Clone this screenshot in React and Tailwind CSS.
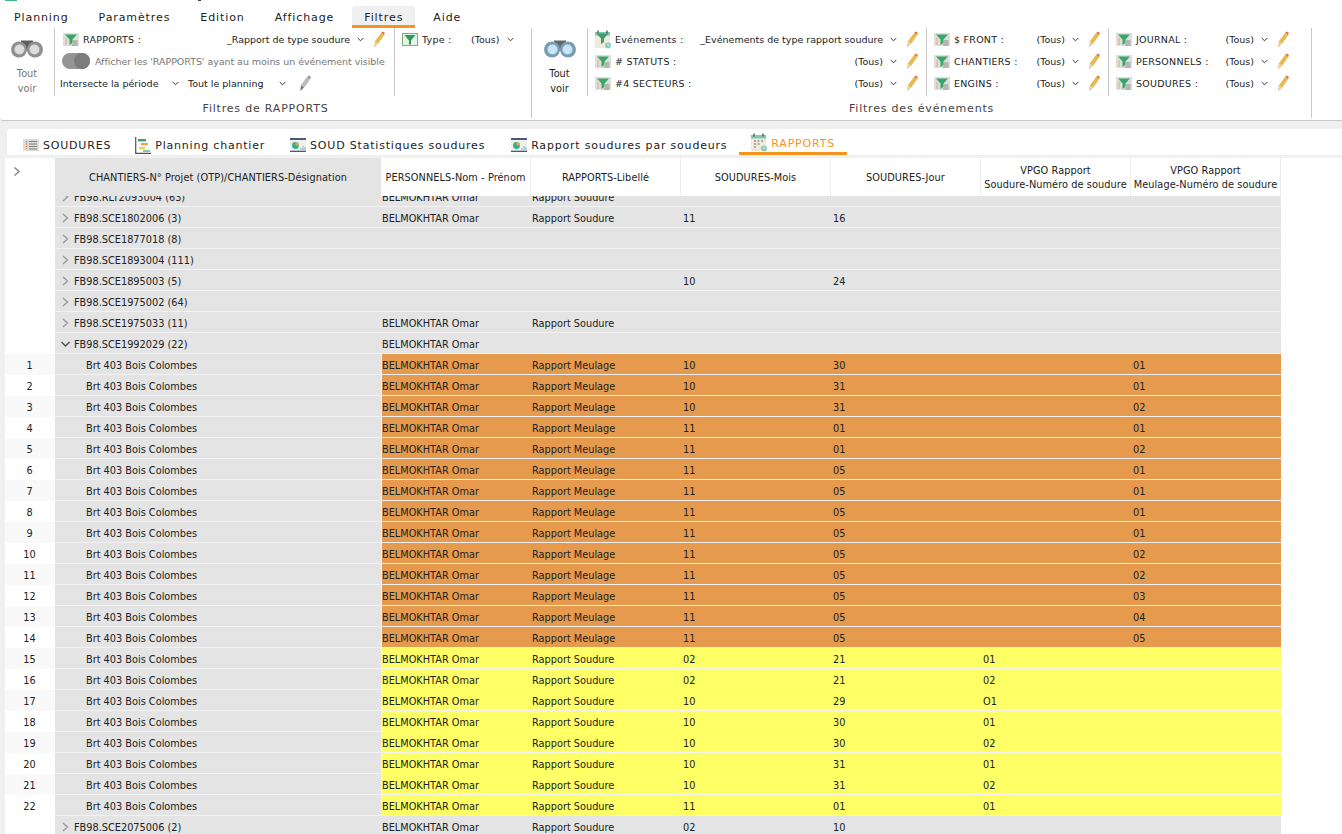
import React from 'react';

const FONT = "font-['DejaVu_Sans',Verdana,sans-serif]";

const Chevron = ({ className = 'ml-[7px]' }) => (
  <svg width="7" height="5" viewBox="0 0 7 5" className={`shrink-0 ${className}`}>
    <path d="M0.7 1 L3.5 3.8 L6.3 1" fill="none" stroke="#333" strokeWidth="1" />
  </svg>
);

const Pencil = ({ gray = false, className = 'ml-[10px]' }) => (
  <svg width="11" height="16" viewBox="0 0 11 16" className={`shrink-0 ${className}`}>
    <path d="M0.6 15.4 L1.2 10.6 L7.6 1.8 L10.2 3.6 L3.8 12.6 Z" fill={gray ? '#bdbdbd' : '#edbb4a'} stroke={gray ? '#9a9a9a' : '#c99a35'} strokeWidth="0.5" />
    <path d="M7.6 1.8 L8.7 0.4 L10.9 2 L10.2 3.6 Z" fill={gray ? '#8e8e8e' : '#e2683c'} />
    <path d="M0.6 15.4 L1.2 10.6 L3.8 12.6 Z" fill={gray ? '#777' : '#e9d6ae'} />
  </svg>
);

const Binoculars = ({ color = false }) => {
  const lens = color ? '#c8e4f5' : '#dcdcdc';
  const rim = color ? '#7c9cb3' : '#8f8f8f';
  return (
    <svg width="32" height="18" viewBox="0 0 32 18">
      <path d="M10 0.5 H22 V11 H10 Z" fill={color ? '#5a6872' : '#5c5c5c'} />
      <circle cx="8" cy="9.5" r="8" fill={rim} />
      <circle cx="24" cy="9.5" r="8" fill={rim} />
      <circle cx="8.5" cy="9.5" r="5" fill={lens} />
      <circle cx="23.5" cy="9.5" r="5" fill={lens} />
    </svg>
  );
};

const FunnelIcon = () => (
  <svg width="16" height="13" viewBox="0 0 16 13" className="shrink-0">
    <rect width="16" height="13" fill="#dededa" />
    <path d="M2 1.5 H14 L9.5 6.5 V10 L6.5 12 V6.5 Z" fill="#38a86a" />
    <path d="M10 8 H14.5 M10 10 H14.5 M9 12 H14.5" stroke="#777" strokeWidth="0.8" />
    <path d="M3 5.5 V12" stroke="#e0703c" strokeWidth="1" strokeDasharray="1 1" />
  </svg>
);

const CalendarIcon = ({ funnel = false }) => (
  <svg width="16" height="19" viewBox="0 0 16 19" className="shrink-0">
    <rect x="0" y="3" width="15" height="15" fill="#efeadb" />
    <rect x="0" y="2" width="15" height="3.5" fill="#7fc7b4" />
    <path d="M3 0.5 V3.5 M12 0.5 V3.5" stroke="#42645a" strokeWidth="1.4" />
    {funnel ? (
      <path d="M1.5 3.5 H13.5 L9 8.5 V12 L6 14 V8.5 Z" fill="#3f9e68" />
    ) : (
      <path d="M3 8 H5 M6.5 8 H8.5 M10 8 H12 M3 11 H5 M6.5 11 H8.5 M3 14 H5" stroke="#9a9686" strokeWidth="1.3" />
    )}
    <circle cx="13" cy="15.5" r="3" fill="#87cdbc" />
    <path d="M13 14 V15.5 H14.3" fill="none" stroke="#fff" strokeWidth="0.7" />
  </svg>
);

const TypeIcon = () => (
  <svg width="16" height="13" viewBox="0 0 16 13" className="shrink-0">
    <rect x="0.5" y="0.5" width="15" height="12" fill="#e6f3e0" stroke="#7fae7a" />
    <path d="M2.5 2 H13.5 L9 7.5 V11 L7 12 V7.5 Z" fill="#2f9a5e" />
  </svg>
);

const ListIcon = () => (
  <svg width="16" height="12" viewBox="0 0 16 12" className="shrink-0">
    <rect width="16" height="12" fill="#dedcd8" />
    <path d="M6 2.5 H14 M6 5 H14 M6 7.5 H14 M6 10 H14" stroke="#777" strokeWidth="0.9" />
    <path d="M3.5 2 V10" stroke="#e0703c" strokeWidth="1.4" strokeDasharray="1.2 1.2" />
  </svg>
);

const GanttIcon = () => (
  <svg width="16" height="17" viewBox="0 0 16 17" className="shrink-0">
    <path d="M0.7 0 V16.3 H16" fill="none" stroke="#44546a" strokeWidth="1.2" />
    <rect x="3" y="2" width="8" height="2.4" fill="#3f9e68" />
    <rect x="6" y="6" width="7" height="2.4" fill="#f2a640" />
    <rect x="4" y="10" width="6" height="2.4" fill="#e8d24a" />
    <rect x="8" y="13" width="7" height="2" fill="#7fc7b4" />
  </svg>
);

const StatsIcon = () => (
  <svg width="16" height="14" viewBox="0 0 16 14" className="shrink-0">
    <rect width="16" height="14" fill="#eef0ee" />
    <rect width="16" height="2" fill="#4a5a78" />
    <circle cx="5.5" cy="7.5" r="3.4" fill="#2fae8e" />
    <path d="M5.5 7.5 V4.1 A3.4 3.4 0 0 1 8.9 7.5 Z" fill="#f0a63c" />
    <path d="M11 12 V10 M13 12 V8 M15 12 V9" stroke="#9fb5c9" strokeWidth="1.2" />
    <rect y="12.7" width="16" height="1.3" fill="#4a5a78" />
  </svg>
);

const FilterRow = ({ icon = <FunnelIcon />, label, value = '(Tous)', chevron, pencil }) => (
  <div className="flex items-center h-[22px] text-[9.5px] text-[#222]">
    <span className="w-[16px] flex justify-center shrink-0">{icon}</span>
    <span className="ml-[4px] pt-[2px] whitespace-nowrap tracking-[0.25px]">{label}</span>
    <span className="ml-auto pt-[2px] whitespace-nowrap">{value}</span>
    <Chevron className={chevron || 'ml-[7px]'} />
    <Pencil className={pencil || 'ml-[10px]'} />
  </div>
);

const ToutVoir = ({ color }) => (
  <div className={`flex flex-col items-center w-full pt-[12px] text-[9.75px] leading-[15px] ${color ? 'text-[#222]' : 'text-[#777]'}`}>
    <Binoculars color={color} />
    <span className="mt-[8px]">Tout</span>
    <span>voir</span>
  </div>
);

const Divider = ({ tall }) => (
  <div className={`w-px shrink-0 bg-[#c8c8c8] ${tall ? 'h-[90px]' : 'h-[68px]'}`} />
);

const GroupLabel = ({ children }) => (
  <div className="text-center text-[11px] tracking-[0.8px] text-[#444] leading-[16px] mt-[5px]">{children}</div>
);

const Ribbon = () => (
  <div className="h-[93px] flex border-b border-[#c8c8c8] rounded-bl-[3px] bg-white">
    <div className="w-[532px] shrink-0 flex">
      <div className="w-[531px]">
        <div className="flex h-[68px]">
          <div className="w-[54px] shrink-0"><ToutVoir /></div>
          <Divider />
          <div className="w-[339px] shrink-0 pl-[8px] pr-[9px]">
            <FilterRow label="RAPPORTS :" value="_Rapport de type soudure" />
            <div className="flex items-center h-[22px] -ml-[1px] text-[9.5px] text-[#777] whitespace-nowrap">
              <div className="w-[28px] h-[16px] rounded-full bg-[#949494] flex justify-end shrink-0">
                <div className="w-[16px] h-[16px] rounded-full bg-[#7c7c7c]" />
              </div>
              <span className="ml-[5px] pt-[2px] tracking-[-0.05px]">Afficher les 'RAPPORTS' ayant au moins un événement visible</span>
            </div>
            <div className="flex items-center h-[22px] -ml-[3px] text-[9.5px] text-[#222] whitespace-nowrap">
              <span className="w-[100px] pt-[2px]">Intersecte la période</span>
              <Chevron className="ml-[12px]" />
              <span className="ml-[9px] w-[79px] pt-[2px]">Tout le planning</span>
              <Chevron className="ml-[12px]" />
              <Pencil gray className="ml-[14px]" />
            </div>
          </div>
          <Divider />
          <div className="flex-1 pl-[7px]">
            <div className="flex items-center h-[22px] text-[9.5px] text-[#222]">
              <TypeIcon />
              <span className="ml-[4px] pt-[2px] w-[30px] tracking-[0.25px] whitespace-nowrap">Type :</span>
              <span className="ml-[19px] pt-[2px]">(Tous)</span>
              <Chevron className="ml-[8px]" />
            </div>
          </div>
        </div>
        <GroupLabel>Filtres de RAPPORTS</GroupLabel>
      </div>
      <Divider tall />
    </div>
    <div className="w-[779px] shrink-0">
      <div className="flex h-[68px]">
        <div className="w-[55px] shrink-0"><ToutVoir color /></div>
        <Divider />
        <div className="w-[338px] shrink-0 pl-[7px] pr-[8px]">
          <FilterRow icon={<CalendarIcon funnel />} label="Evénements :" value="_Evénements de type rapport soudure" />
          <FilterRow label="# STATUTS :" />
          <FilterRow label="#4 SECTEURS :" />
        </div>
        <Divider />
        <div className="w-[181px] shrink-0 pl-[7px] pr-[8px]">
          <FilterRow label="$ FRONT :" />
          <FilterRow label="CHANTIERS :" />
          <FilterRow label="ENGINS :" />
        </div>
        <Divider />
        <div className="w-[202px] shrink-0 pl-[7px] pr-[22px]">
          <FilterRow label="JOURNAL :" />
          <FilterRow label="PERSONNELS :" />
          <FilterRow label="SOUDURES :" />
        </div>
      </div>
      <GroupLabel>Filtres des événements</GroupLabel>
    </div>
    <Divider tall />
  </div>
);

const menus = ['Planning', 'Paramètres', 'Edition', 'Affichage', 'Filtres', 'Aide'];

const Tab = ({ icon, label, className = '' }) => (
  <div className={`flex items-center gap-[4px] whitespace-nowrap ${className}`}>
    {icon}
    <span className="pt-[2px]">{label}</span>
  </div>
);

const Tabs = () => (
  <div className="mt-[8px] ml-[7px] h-[26px] bg-white rounded-l-[4px] flex items-center pl-[16px] pt-[6px] text-[11px] tracking-[0.8px] text-[#222]">
    <Tab icon={<ListIcon />} label="SOUDURES" />
    <Tab icon={<GanttIcon />} label="Planning chantier" className="ml-[24px]" />
    <Tab icon={<StatsIcon />} label="SOUD Statistiques soudures" className="ml-[25px]" />
    <Tab icon={<StatsIcon />} label="Rapport soudures par soudeurs" className="ml-[26px]" />
    <div className="ml-[12px] -mt-[6px] h-[26px] w-[108px] border-b-[3px] border-[#f7941d] flex items-center gap-[4px] pl-[12px] pt-[4px] text-[#f7941d] whitespace-nowrap">
      <CalendarIcon />
      <span className="pt-[4px]">RAPPORTS</span>
    </div>
  </div>
);

const COLS = 'grid grid-cols-[50px_326px_repeat(6,150px)]';

const headers = [
  ['PERSONNELS-Nom - Prénom'],
  ['RAPPORTS-Libellé'],
  ['SOUDURES-Mois'],
  ['SOUDURES-Jour'],
  ['VPGO Rapport', 'Soudure-Numéro de soudure'],
  ['VPGO Rapport', 'Meulage-Numéro de soudure'],
];

const TableHeader = () => (
  <div className={`${COLS} h-[38px] text-[9.75px] tracking-[0.08px] leading-[14px] text-[#222]`}>
    <div className="bg-white pl-[7px] pt-[8px]">
      <svg width="8" height="11" viewBox="0 0 8 11" className="ml-[1px]">
        <path d="M1.5 1.5 L6 5.5 L1.5 9.5" fill="none" stroke="#8c8c8c" strokeWidth="1.6" />
      </svg>
    </div>
    <div className="bg-[#e4e4e4] pt-[2px] flex items-center justify-center whitespace-nowrap">CHANTIERS-N° Projet (OTP)/CHANTIERS-Désignation</div>
    {headers.map((lines, i) => (
      <div key={i} className="bg-white pt-[2px] border-r border-[#eeeeee] flex flex-col items-center justify-center whitespace-nowrap">
        {lines.map((l) => <span key={l}>{l}</span>)}
      </div>
    ))}
  </div>
);

const B = 'BELMOKHTAR Omar';
const S = 'Rapport Soudure';
const M = 'Rapport Meulage';

const groups1 = [
  ['FB98.RLT2093004 (63)', B, S],
  ['FB98.SCE1802006 (3)', B, S, '11', '16'],
  ['FB98.SCE1877018 (8)'],
  ['FB98.SCE1893004 (111)'],
  ['FB98.SCE1895003 (5)', '', '', '10', '24'],
  ['FB98.SCE1975002 (64)'],
  ['FB98.SCE1975033 (11)', B, S],
];

const meulage = [
  ['10', '30', '01'], ['10', '31', '01'], ['10', '31', '02'], ['11', '01', '01'], ['11', '01', '02'],
  ['11', '05', '01'], ['11', '05', '01'], ['11', '05', '01'], ['11', '05', '01'], ['11', '05', '02'],
  ['11', '05', '02'], ['11', '05', '03'], ['11', '05', '04'], ['11', '05', '05'],
];

const soudure = [
  ['02', '21', '01'], ['02', '21', '02'], ['10', '29', 'O1'], ['10', '30', '01'],
  ['10', '30', '02'], ['10', '31', '01'], ['10', '31', '02'], ['11', '01', '01'],
];

const Cell = ({ children, className = 'pl-[1px]' }) => (
  <div className={`pt-[4px] flex items-center whitespace-nowrap overflow-hidden ${className}`}>{children}</div>
);

const GroupRow = ({ name, person, lib, mois, jour, open }) => (
  <div className={`${COLS} h-[21px] text-[9.75px] text-[#222]`}>
    <div className="bg-white" />
    <div className="col-span-7 grid grid-cols-[326px_repeat(6,150px)] bg-[#e4e4e4] border-b border-[#f2f2f2]">
      <div className="flex items-center pl-[6px]">
        <svg width="9" height="10" viewBox="0 0 9 10" className="shrink-0 mt-[2px]">
          {open
            ? <path d="M0.5 3 L4.5 7 L8.5 3" fill="none" stroke="#555" strokeWidth="1.5" />
            : <path d="M2 1 L6.5 5 L2 9" fill="none" stroke="#9a9a9a" strokeWidth="1.4" />}
        </svg>
        <span className="ml-[4px] pt-[4px] whitespace-nowrap">{name}</span>
      </div>
      <Cell>{person}</Cell>
      <Cell>{lib}</Cell>
      <Cell className="pl-[2px]">{mois}</Cell>
      <Cell className="pl-[2px]">{jour}</Cell>
      <Cell />
      <Cell />
    </div>
  </div>
);

const DetailRow = ({ n, lib, values, bg, numCol }) => (
  <div className={`${COLS} h-[21px] text-[9.75px] text-[#222]`}>
    <div className={`flex items-center justify-center pr-[1px] pt-[4px] ${n % 2 ? 'bg-[#f9f9f9]' : 'bg-white'}`}>{n}</div>
    <div className="bg-[#e4e4e4] border-b border-[#f2f2f2] flex items-center pl-[31px] pt-[4px] whitespace-nowrap">Brt 403 Bois Colombes</div>
    <div className={`col-span-6 grid grid-cols-[149px_repeat(5,150px)] border-b border-l border-[#f2f2f2] ${bg}`}>
      <Cell className="pl-0">{B}</Cell>
      <Cell>{lib}</Cell>
      <Cell className="pl-[2px]">{values[0]}</Cell>
      <Cell className="pl-[2px]">{values[1]}</Cell>
      <Cell className="pl-[2px]">{numCol === 0 ? values[2] : ''}</Cell>
      <Cell className="pl-[2px]">{numCol === 1 ? values[2] : ''}</Cell>
    </div>
  </div>
);

const Table = () => (
  <div className="mt-[3px] pl-[5px] bg-[#f0f0f0]">
    <div className="bg-white w-[1337px]">
      <TableHeader />
      <div className="overflow-hidden">
        <div className="-mt-[10px]">
          {groups1.map(([name, person, lib, mois, jour]) => (
            <GroupRow key={name} name={name} person={person} lib={lib} mois={mois} jour={jour} />
          ))}
          <GroupRow name="FB98.SCE1992029 (22)" person={B} open />
          {meulage.map((values, i) => (
            <DetailRow key={i} n={i + 1} lib={M} values={values} bg="bg-[#e69a4e]" numCol={1} />
          ))}
          {soudure.map((values, i) => (
            <DetailRow key={i} n={i + 15} lib={S} values={values} bg="bg-[#ffff66]" numCol={0} />
          ))}
          <GroupRow name="FB98.SCE2075006 (2)" person={B} lib={S} mois="02" jour="10" />
        </div>
      </div>
    </div>
  </div>
);

export default function App() {
  return (
    <div className={`h-[834px] w-[1342px] overflow-hidden bg-[#f0f0f0] ${FONT}`}>
      <div className="bg-white h-[28px]">
        <div className="h-[2px] flex">
          <div className="ml-[5px] w-[12px] h-[1px] bg-[#3fb68b]" />
          <div className="ml-[181px] w-[3px] h-[1px] bg-[#444]" />
        </div>
        <div className="flex pl-[14px] gap-[30px] text-[11px] tracking-[0.9px] text-[#222] h-[26px] pt-[4px]">
          {menus.map((m) =>
            m === 'Filtres' ? (
              <div key={m} className="-mx-[12px] px-[12px] h-[22px] bg-[#f0f0f0] border-b-[3px] border-[#f7941d] rounded-t-[3px] leading-[14px] pt-[5px]">{m}</div>
            ) : (
              <div key={m} className="leading-[14px] pt-[5px]">{m}</div>
            )
          )}
        </div>
      </div>
      <Ribbon />
      <Tabs />
      <Table />
    </div>
  );
}
